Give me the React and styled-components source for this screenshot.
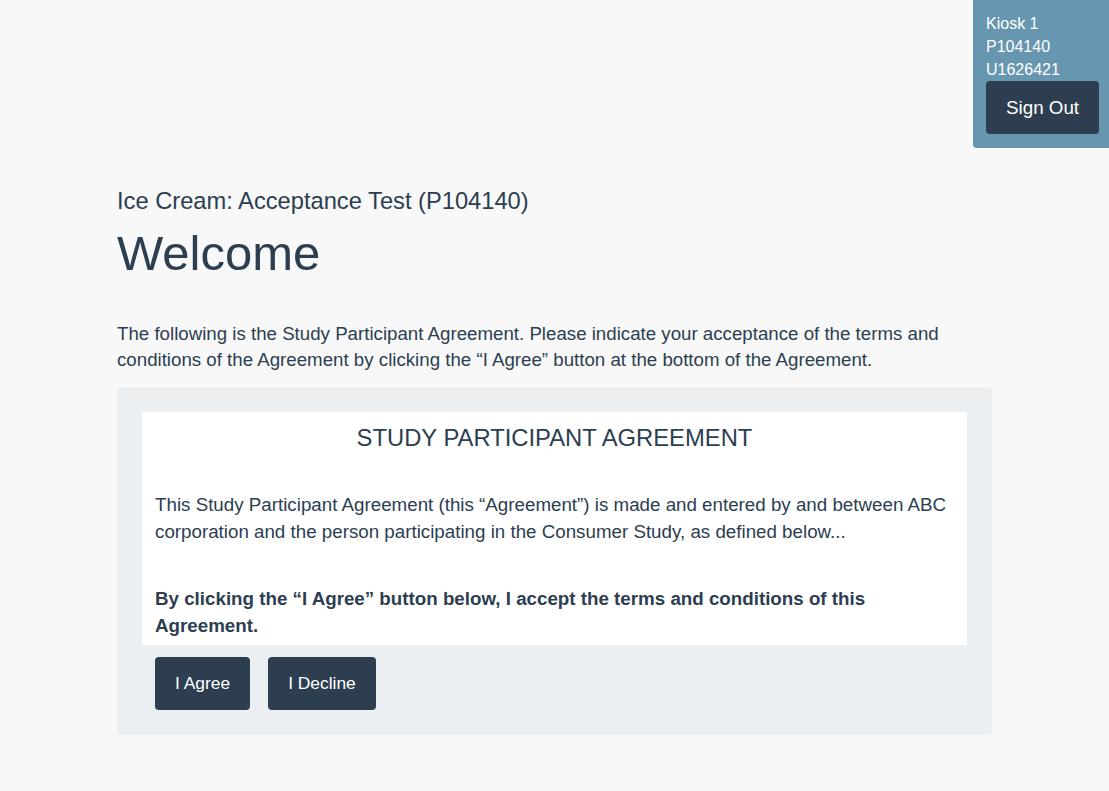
import React from "react";
import styled, { createGlobalStyle } from "styled-components";

const Global = createGlobalStyle`
  html, body { margin: 0; padding: 0; }
  body {
    background: #f8f8f8;
    font-family: "Liberation Sans", Arial, sans-serif;
    color: #2c3e50;
  }
`;

const Page = styled.div`
  min-height: 791px;
  display: flex;
  flex-direction: column;
`;

const TopBar = styled.header`
  display: flex;
  justify-content: flex-end;
`;

const KioskPanel = styled.div`
  width: 136px;
  box-sizing: border-box;
  background: #6796b0;
  border-bottom-left-radius: 4px;
  padding: 12px 10px 14px 13px;
  color: #fff;
  font-size: 16px;
  line-height: 23px;
`;

const KioskLine = styled.div``;

const Button = styled.button`
  background: #2d3e50;
  color: #fff;
  border: none;
  border-radius: 4px;
  font-family: "Liberation Sans", Arial, sans-serif;
  font-size: ${(p) => (p.$large ? "18.8px" : "17.4px")};
  line-height: 27px;
  padding: 13px 20px;
  white-space: nowrap;
  cursor: pointer;
`;

const SignOut = styled(Button)`
  display: block;
`;

const Main = styled.main`
  width: 875px;
  margin: 40px 0 0 117px;
`;

const Subtitle = styled.div`
  font-size: 23.7px;
  line-height: 26px;
`;

const Heading = styled.h1`
  margin: 11px 0 0;
  font-size: 49px;
  font-weight: 400;
  line-height: 56px;
`;

const Intro = styled.p`
  margin: 40px 0 0;
  font-size: 18.7px;
  line-height: 26px;
`;

const Panel = styled.section`
  margin-top: 14px;
  background: #eceff1;
  border-radius: 4px;
  padding: 25px;
`;

const Agreement = styled.div`
  background: #fff;
  height: 233px;
  overflow: hidden;
  padding: 0 13px;
`;

const AgreementTitle = styled.h2`
  margin: 0;
  padding-top: 12px;
  text-align: center;
  font-size: 23.8px;
  font-weight: 400;
  line-height: 27px;
`;

const AgreementText = styled.p`
  margin: 40px 0 0;
  font-size: 18.75px;
  line-height: 27px;
  font-weight: ${(p) => (p.$bold ? 700 : 400)};
`;

const Actions = styled.div`
  display: flex;
  gap: 18px;
  padding: 12px 13px 0;
`;

export default function App() {
  return (
    <Page>
      <Global />
      <TopBar>
        <KioskPanel>
          <KioskLine>Kiosk 1</KioskLine>
          <KioskLine>P104140</KioskLine>
          <KioskLine>U1626421</KioskLine>
          <SignOut $large>Sign Out</SignOut>
        </KioskPanel>
      </TopBar>
      <Main>
        <Subtitle>Ice Cream: Acceptance Test (P104140)</Subtitle>
        <Heading>Welcome</Heading>
        <Intro>
          The following is the Study Participant Agreement. Please indicate your
          acceptance of the terms and conditions of the Agreement by clicking the
          “I Agree” button at the bottom of the Agreement.
        </Intro>
        <Panel>
          <Agreement>
            <AgreementTitle>STUDY PARTICIPANT AGREEMENT</AgreementTitle>
            <AgreementText>
              This Study Participant Agreement (this “Agreement”) is made and
              entered by and between ABC corporation and the person participating
              in the Consumer Study, as defined below...
            </AgreementText>
            <AgreementText $bold>
              By clicking the “I Agree” button below, I accept the terms and
              conditions of this Agreement.
            </AgreementText>
          </Agreement>
          <Actions>
            <Button>I Agree</Button>
            <Button>I Decline</Button>
          </Actions>
        </Panel>
      </Main>
    </Page>
  );
}
